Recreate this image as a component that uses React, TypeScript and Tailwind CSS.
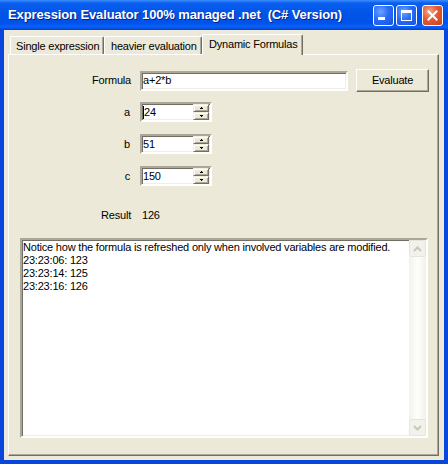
import React from "react";

const font = "font-['Liberation_Sans',Arial,sans-serif]";

function SunkenBox({ className = "", children }: { className?: string; children?: React.ReactNode }) {
  return (
    <div
      className={`border-2 border-t-[#ACA899] border-l-[#ACA899] border-r-white border-b-white bg-white shadow-[inset_1px_1px_0_#716F64,inset_-1px_-1px_0_#F1EFE2] ${className}`}
    >
      {children}
    </div>
  );
}

function SpinBtn({ up }: { up: boolean }) {
  return (
    <div className="w-[16px] h-[8px] bg-[#ECE9D8] border border-t-[#F1EFE2] border-l-[#F1EFE2] border-r-[#716F64] border-b-[#716F64] shadow-[inset_1px_1px_0_#ffffff,inset_-1px_-1px_0_#ACA899] flex items-center justify-center">
      <svg width="3" height="2" viewBox="0 0 3 2" shapeRendering="crispEdges">
        {up ? (
          <>
            <rect x="1" y="0" width="1" height="1" fill="#000" />
            <rect x="0" y="1" width="3" height="1" fill="#000" />
          </>
        ) : (
          <>
            <rect x="0" y="0" width="3" height="1" fill="#000" />
            <rect x="1" y="1" width="1" height="1" fill="#000" />
          </>
        )}
      </svg>
    </div>
  );
}

function Spinner({ value, caret }: { value: string; caret?: boolean }) {
  return (
    <SunkenBox className="w-[72px] h-[20px] flex items-stretch">
      <div className="flex-1 flex items-center pl-[1px] text-[11px] text-black leading-none">
        {caret && <span className="inline-block w-[1px] h-[13px] bg-black" />}
        <span>{value}</span>
      </div>
      <div className="flex flex-col mr-[1px]">
        <SpinBtn up />
        <SpinBtn up={false} />
      </div>
    </SunkenBox>
  );
}

function TitleButton({ kind }: { kind: "min" | "max" | "close" }) {
  const bg =
    kind === "close"
      ? "bg-[radial-gradient(circle_at_35%_30%,#f4a88c_0%,#e65a34_45%,#c7401c_100%)]"
      : "bg-[radial-gradient(circle_at_35%_30%,#6ea2ff_0%,#2a6cf5_45%,#1650e0_100%)]";
  return (
    <div className={`w-[21px] h-[21px] rounded-[3px] border border-white ${bg} flex items-center justify-center`}>
      {kind === "min" && (
        <div className="w-[21px] h-[21px] relative">
          <div className="absolute left-[4px] top-[12px] w-[7px] h-[3px] bg-white" />
        </div>
      )}
      {kind === "max" && (
        <div className="w-[11px] h-[11px] border border-white border-t-[3px]" />
      )}
      {kind === "close" && (
        <svg width="11" height="11" viewBox="0 0 11 11">
          <path d="M1.5 1.5 L9.5 9.5 M9.5 1.5 L1.5 9.5" stroke="#fff" strokeWidth="2" strokeLinecap="square" />
        </svg>
      )}
    </div>
  );
}

export default function App() {
  const tabBase =
    "border-l border-t border-r border-l-white border-t-white border-r-[#716F64] shadow-[inset_-1px_0_0_#ACA899] rounded-t-[2px] bg-[#ECE9D8] flex items-center text-[11px] text-black leading-none";
  return (
    <div className={`w-[448px] h-[464px] flex flex-col bg-[#0846dc] ${font}`}>
      {/* Title bar */}
      <div className="h-[30px] flex items-center bg-[linear-gradient(180deg,#3c8ffb_0%,#0a5ef0_10%,#0054e6_45%,#0052e8_75%,#0a60f8_90%,#0040d0_100%)]">
        <div className="pl-[8px] flex-1 text-white font-bold text-[13px] tracking-[-0.12px] whitespace-pre [text-shadow:1px_1px_#0a1f8a]">
          Expression Evaluator 100% managed .net  (C# Version)
        </div>
        <div className="flex items-center gap-[2px] pr-[5px] pt-[1px]">
          <TitleButton kind="min" />
          <TitleButton kind="max" />
          <div className="w-[1px]" />
          <TitleButton kind="close" />
        </div>
      </div>

      {/* Client area */}
      <div className="flex-1 mx-[4px] mb-[4px] bg-[#ECE9D8] pl-[4px] pr-[5px] pt-[4px] pb-[4px] flex flex-col tracking-[-0.2px]">
        {/* tab headers */}
        <div className="h-[20px] flex items-end">
          <div className={`${tabBase} ml-[2px] w-[94px] h-[18px] pl-[5px] pt-[1px]`}>Single expression</div>
          <div className={`${tabBase} w-[98px] h-[18px] pl-[6px] pt-[1px]`}>heavier evaluation</div>
          <div className={`${tabBase} relative z-10 w-[101px] h-[21px] -mb-[1px] pl-[6px] pb-[1px]`}>Dynamic Formulas</div>
        </div>
        {/* panel */}
        <div className="flex-1 border border-t-white border-l-white border-r-[#716F64] border-b-[#716F64] shadow-[inset_-1px_-1px_0_#ACA899] flex flex-col text-[11px] text-black">
          {/* Formula row */}
          <div className="mt-[14px] h-[23px] flex items-center">
            <div className="w-[122px] text-right">Formula</div>
            <SunkenBox className="ml-[9px] w-[208px] h-[20px] flex items-center pl-[1px]">
              <span>a+2*b</span>
            </SunkenBox>
            <div className="ml-[8px] w-[73px] h-[23px] border border-t-white border-l-white border-r-[#716F64] border-b-[#716F64] shadow-[inset_-1px_-1px_0_#ACA899] flex items-center justify-center">
              Evaluate
            </div>
          </div>
          {/* a */}
          <div className="mt-[10px] h-[20px] flex items-center">
            <div className="w-[121px] text-right">a</div>
            <div className="ml-[10px]">
              <Spinner value="24" caret />
            </div>
          </div>
          <div className="mt-[12px] h-[20px] flex items-center">
            <div className="w-[121px] text-right">b</div>
            <div className="ml-[10px]">
              <Spinner value="51" />
            </div>
          </div>
          <div className="mt-[12px] h-[20px] flex items-center">
            <div className="w-[121px] text-right">c</div>
            <div className="ml-[10px]">
              <Spinner value="150" />
            </div>
          </div>
          {/* Result */}
          <div className="mt-[23px] h-[13px] flex items-center">
            <div className="w-[122px] text-right">Result</div>
            <div className="ml-[11px]">126</div>
          </div>
          {/* log */}
          <SunkenBox className="mt-[16px] ml-[11px] w-[408px] h-[200px] flex">
            <div className="flex-1 pl-[1px] pt-[1px] leading-[13px]">
              <div>Notice how the formula is refreshed only when involved variables are modified.</div>
              <div>23:23:06: 123</div>
              <div>23:23:14: 125</div>
              <div>23:23:16: 126</div>
            </div>
            <div className="w-[17px] flex flex-col bg-[linear-gradient(90deg,#f3f1ec_0%,#fefefb_50%,#f3f1ec_100%)]">
              <div className="h-[17px] rounded-[2px] border border-[#e6e5dd] bg-[#f2f1ea] flex items-center justify-center">
                <svg width="9" height="6" viewBox="0 0 9 6">
                  <path d="M1 5 L4.5 1.5 L8 5" stroke="#c9c7ba" strokeWidth="2" fill="none" />
                </svg>
              </div>
              <div className="flex-1" />
              <div className="h-[17px] rounded-[2px] border border-[#e6e5dd] bg-[#f2f1ea] flex items-center justify-center">
                <svg width="9" height="6" viewBox="0 0 9 6">
                  <path d="M1 1 L4.5 4.5 L8 1" stroke="#c9c7ba" strokeWidth="2" fill="none" />
                </svg>
              </div>
            </div>
          </SunkenBox>
        </div>
      </div>
    </div>
  );
}
